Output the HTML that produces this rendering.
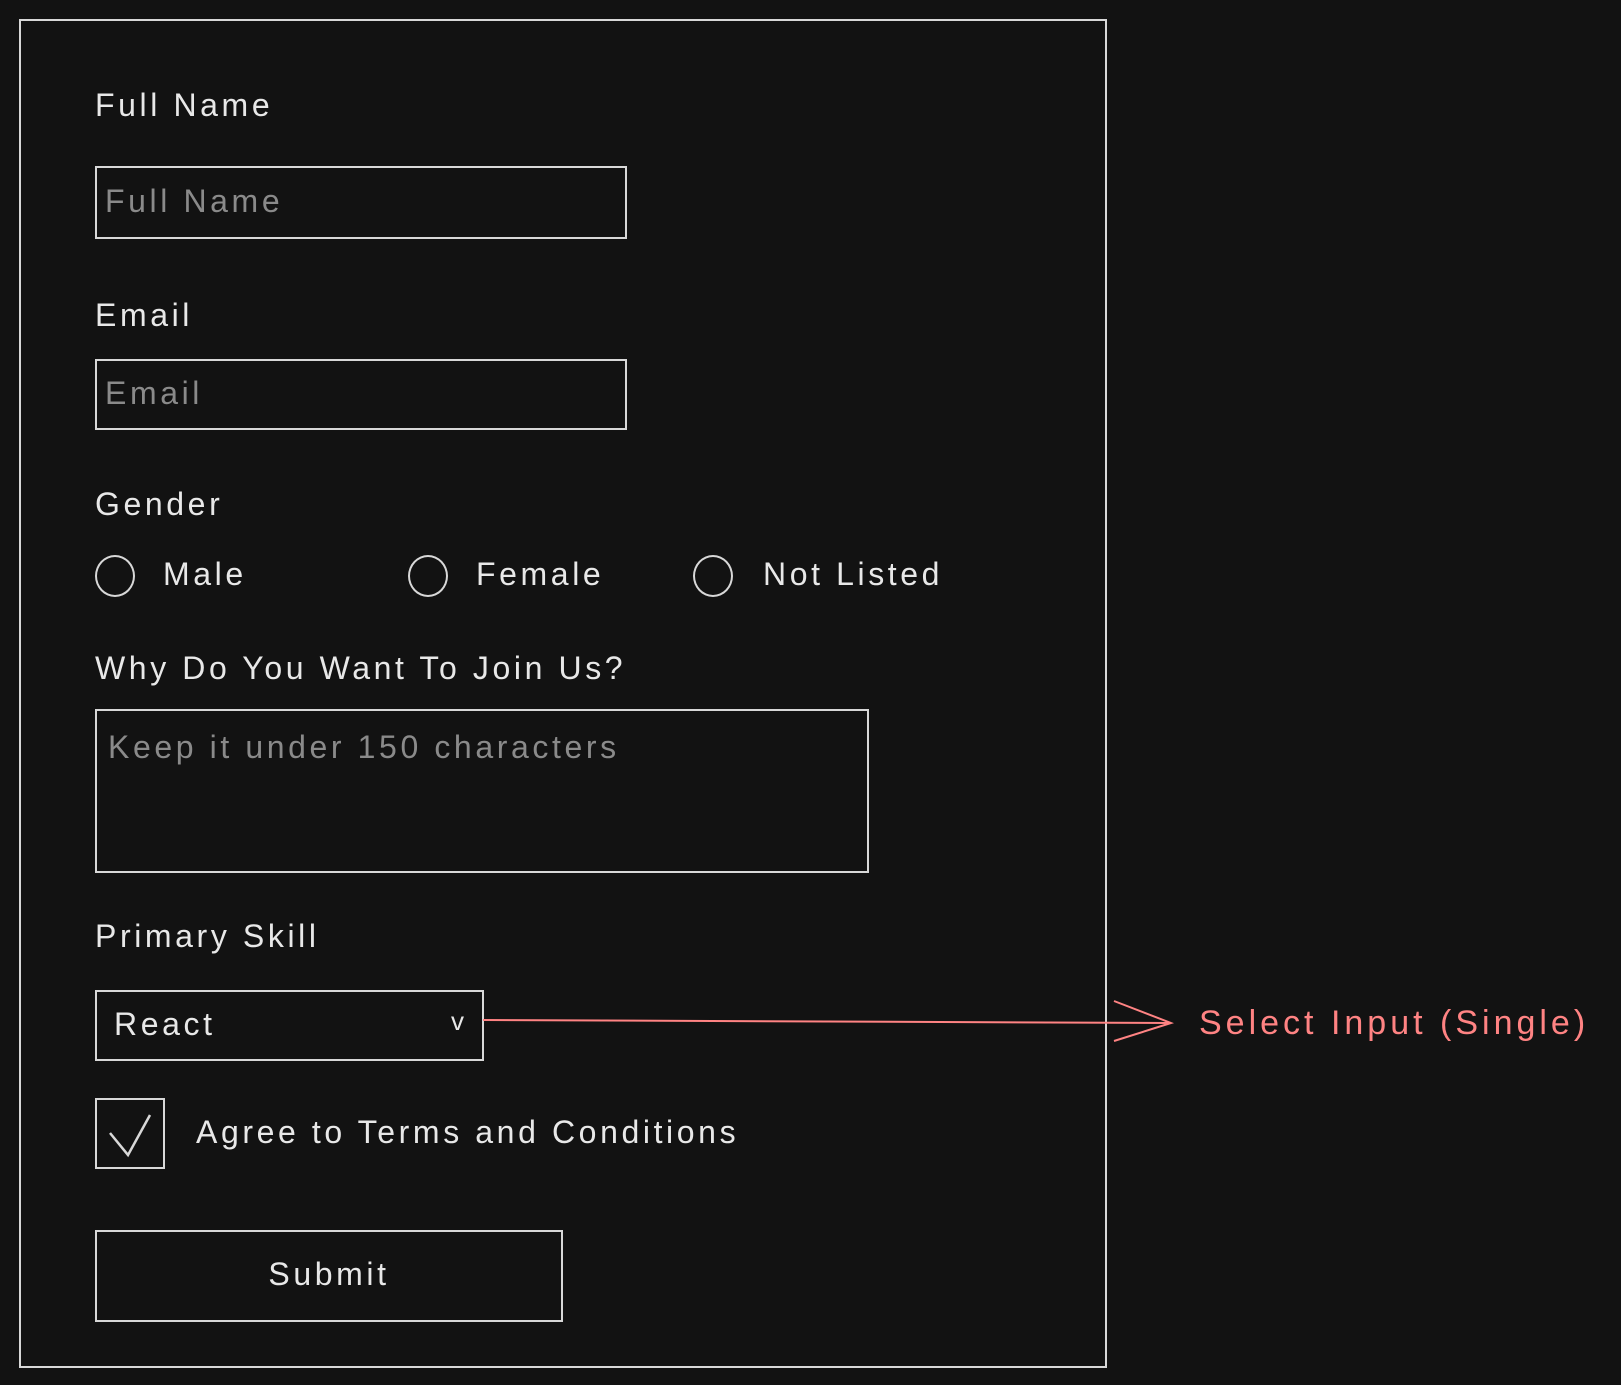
<!DOCTYPE html>
<html><head><meta charset="utf-8"><style>
body{margin:0;width:1621px;height:1385px;background:#121212;overflow:hidden;position:relative;font-family:"Liberation Sans",sans-serif;color:#e8e8e8}
.b{position:absolute;border:2px solid #d8d8d8;box-sizing:border-box}
.t{position:absolute;font-size:32px;letter-spacing:3.6px;white-space:nowrap;line-height:1}
.p{color:#8a8a8a}
.c{position:absolute;border:2px solid #d8d8d8;border-radius:50%;width:40px;height:42px;box-sizing:border-box}
</style></head><body>
<div class="b" style="left:19px;top:19px;width:1088px;height:1349px"></div>
<div class="t" style="left:95px;top:89px">Full Name</div>
<div class="b" style="left:95px;top:166px;width:532px;height:73px"></div>
<div class="t p" style="left:105px;top:185px">Full Name</div>
<div class="t" style="left:95px;top:299px">Email</div>
<div class="b" style="left:95px;top:359px;width:532px;height:71px"></div>
<div class="t p" style="left:105px;top:377px">Email</div>
<div class="t" style="left:95px;top:488px">Gender</div>
<div class="c" style="left:95px;top:555px"></div>
<div class="t" style="left:163px;top:558px">Male</div>
<div class="c" style="left:408px;top:555px"></div>
<div class="t" style="left:476px;top:558px">Female</div>
<div class="c" style="left:693px;top:555px"></div>
<div class="t" style="left:763px;top:558px">Not Listed</div>
<div class="t" style="left:95px;top:652px">Why Do You Want To Join Us?</div>
<div class="b" style="left:95px;top:709px;width:774px;height:164px"></div>
<div class="t p" style="left:108px;top:731px">Keep it under 150 characters</div>
<div class="t" style="left:95px;top:920px">Primary Skill</div>
<div class="b" style="left:95px;top:990px;width:389px;height:71px"></div>
<div class="t" style="left:114px;top:1008px">React</div>
<div class="t" style="left:451px;top:1008px;font-size:26px">v</div>
<svg style="position:absolute;left:0;top:0" width="1621" height="1385">
<path d="M483 1020 L1171 1023 M1114 1001 L1171 1023 L1114 1041" stroke="#ff8383" stroke-width="2" fill="none"/>
<path d="M110 1133 L128 1155 L150 1115" stroke="#d8d8d8" stroke-width="2.5" fill="none"/>
</svg>
<div class="t" style="left:1199px;top:1006px;color:#ff8383;font-size:34px;letter-spacing:4px">Select Input (Single)</div>
<div class="b" style="left:95px;top:1098px;width:70px;height:71px"></div>
<div class="t" style="left:196px;top:1116px">Agree to Terms and Conditions</div>
<div class="b" style="left:95px;top:1230px;width:468px;height:92px"></div>
<div class="t" style="left:95px;top:1258px;width:468px;text-align:center">Submit</div>
</body></html>
